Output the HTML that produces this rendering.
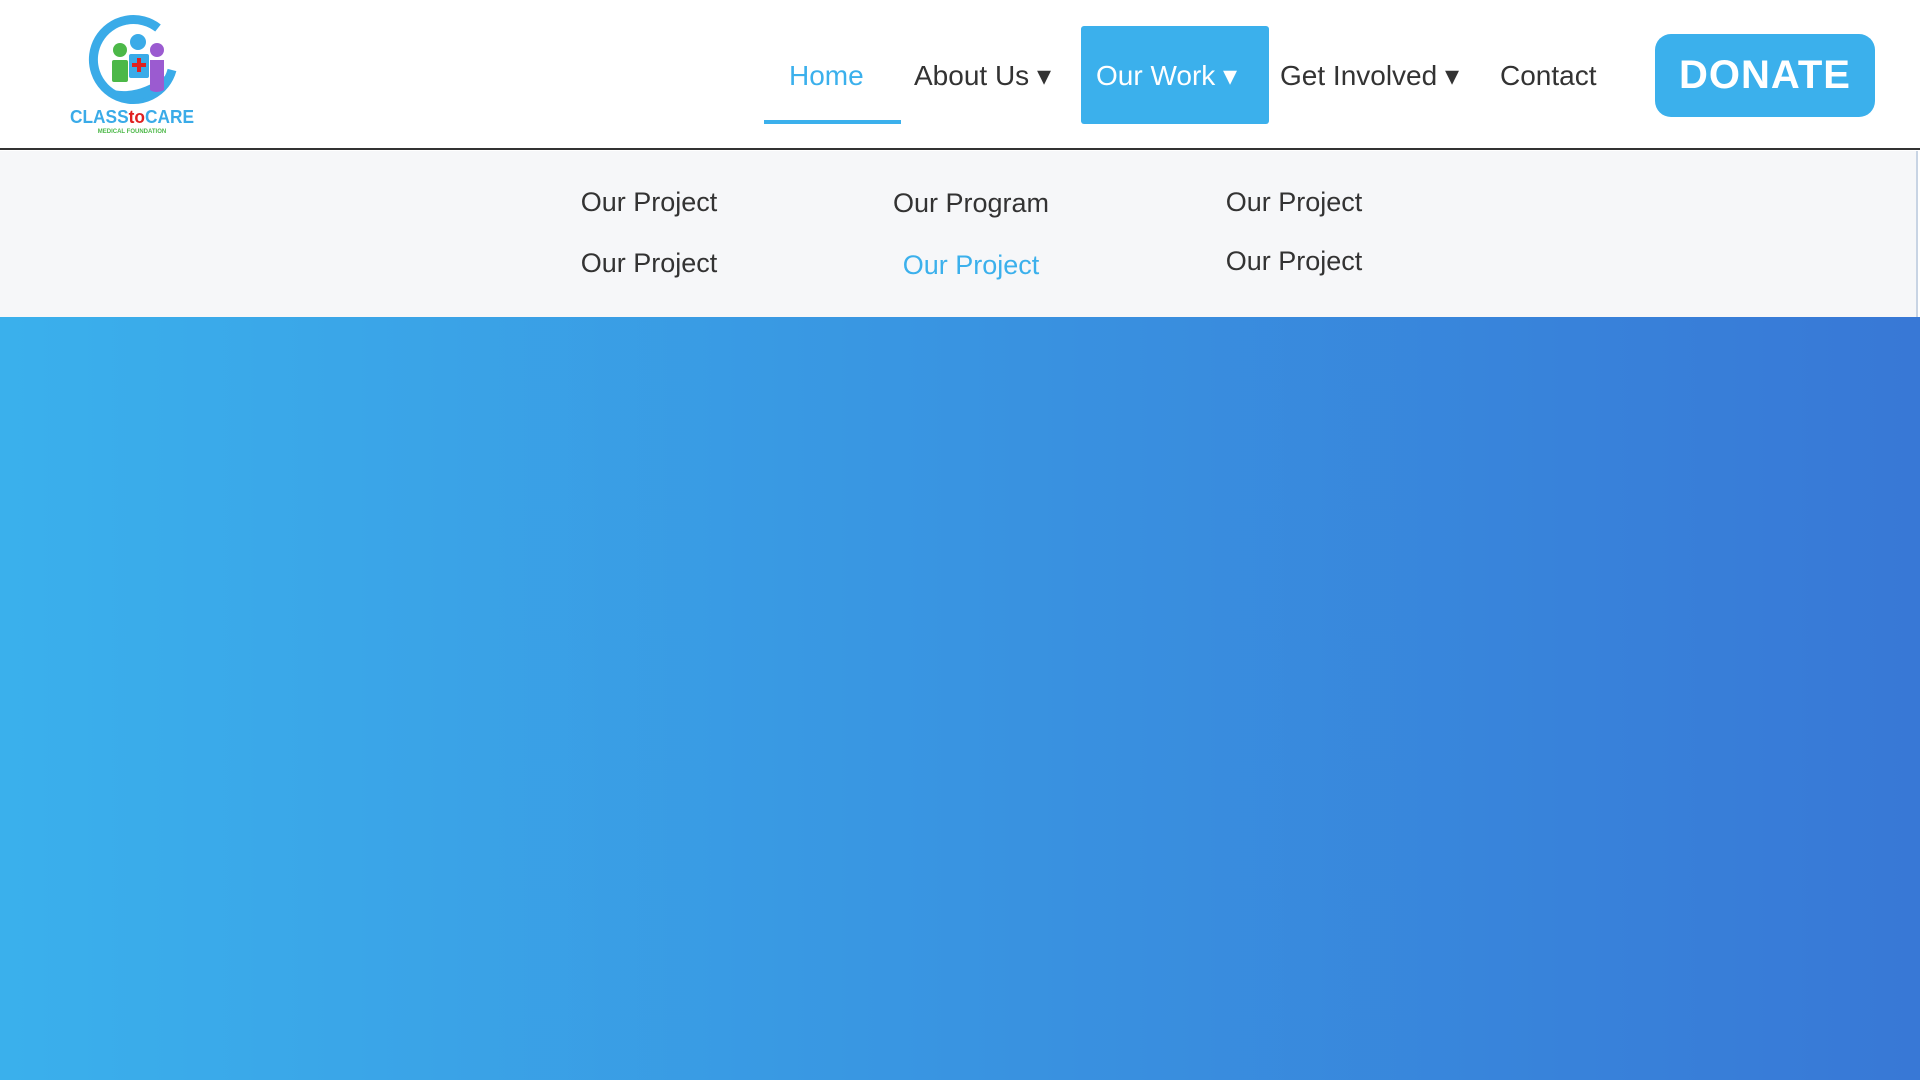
<!DOCTYPE html>
<html><head><meta charset="utf-8"><style>
*{margin:0;padding:0;box-sizing:border-box}
body{width:1920px;height:1080px;overflow:hidden;font-family:"Liberation Sans",sans-serif;background:#fff;position:relative}
header{position:absolute;left:0;top:0;width:1920px;height:150px;background:#fff;border-bottom:2px solid #333}
.nav{position:absolute;top:0;font-size:28px;color:#333;height:150px}
.nav span{position:absolute;white-space:nowrap;top:2px;line-height:148px}
.donate{position:absolute;left:1655px;top:34px;width:220px;height:83px;background:#3bb0ec;border-radius:16px;color:#fff;font-weight:bold;font-size:40px;text-align:center;line-height:83px;letter-spacing:1px}
.dd{position:absolute;left:0;top:151px;width:1918px;height:166px;background:#f6f7f9;border-right:2px solid #c8d4e4}
.dd span{position:absolute;font-size:27px;color:#333;transform:translateX(-50%);white-space:nowrap}
.hero{position:absolute;left:0;top:317px;width:1920px;height:763px;background:linear-gradient(90deg,#3ab0ec,#3878d6)}
</style></head><body>
<header>
<svg style="position:absolute;left:62px;top:14px" width="140" height="122" viewBox="0 0 140 122">
<path d="M96 14 A40 40 0 1 0 110 56" fill="none" stroke="#3aabe8" stroke-width="9"/>
<path d="M44 74 Q72 84 102 62 L106 68 Q82 94 50 84Z" fill="#3aabe8"/>
<circle cx="58" cy="36" r="7" fill="#4cb848"/><rect x="50" y="46" width="16" height="22" rx="2" fill="#4cb848"/>
<circle cx="76" cy="28" r="8" fill="#3aabe8"/><rect x="67" y="40" width="20" height="24" rx="2" fill="#3aabe8"/>
<path d="M77 44v14M70 51h14" stroke="#e02020" stroke-width="4"/>
<circle cx="95" cy="36" r="7" fill="#9b5bd0"/><path d="M88 46h14v30q-8 4-14 0z" fill="#9b5bd0"/>
<text x="70" y="109" text-anchor="middle" font-family="Liberation Sans" font-weight="bold" font-size="18" fill="#3aabe8" textLength="124" lengthAdjust="spacingAndGlyphs">CLASS<tspan fill="#e02020">to</tspan>CARE</text>
<text x="70" y="119" text-anchor="middle" font-family="Liberation Sans" font-weight="bold" font-size="6" fill="#4cb848">MEDICAL FOUNDATION</text>
</svg>
<div style="position:absolute;left:764px;top:120px;width:137px;height:4px;background:#3bb0ec"></div>
<div style="position:absolute;left:1081px;top:26px;width:188px;height:98px;background:#3bb0ec;border-radius:3px"></div>
<div class="nav">
<span style="left:789px;color:#3bb0ec">Home</span>
<span style="left:914px">About Us ▾</span>
<span style="left:1096px;color:#fff">Our Work ▾</span>
<span style="left:1280px">Get Involved ▾</span>
<span style="left:1500px">Contact</span>
</div>
<div class="donate">DONATE</div>
</header>
<div class="dd">
<span style="left:649px;top:36px">Our Project</span>
<span style="left:649px;top:97px">Our Project</span>
<span style="left:971px;top:37px">Our Program</span>
<span style="left:971px;top:99px;color:#3bb0ec">Our Project</span>
<span style="left:1294px;top:36px">Our Project</span>
<span style="left:1294px;top:95px">Our Project</span>
</div>
<div class="hero"></div>
</body></html>
